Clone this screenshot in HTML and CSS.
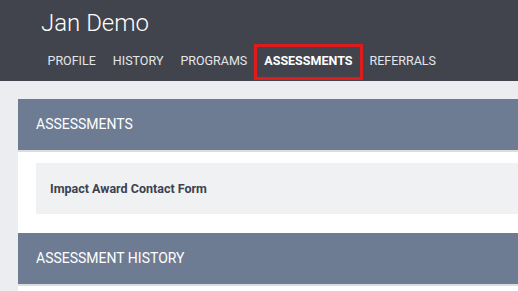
FILE: index.html
```html
<!DOCTYPE html>
<html lang="en">
<head>
<meta charset="UTF-8">
<meta name="viewport" content="width=device-width, initial-scale=1.0">
<title>Jan Demo</title>
<link rel="stylesheet" href="styles.css">
</head>
<body>
<div id="header">
  <div id="client-name">Jan Demo</div>
  <div id="tabs">
    <a class="tab">PROFILE</a>
    <a class="tab">HISTORY</a>
    <a class="tab">PROGRAMS</a>
    <a class="tab active">ASSESSMENTS</a>
    <a class="tab">REFERRALS</a>
  </div>
</div>

<div id="content">
  <div class="panel">
    <div class="panel-title">ASSESSMENTS</div>
    <div class="panel-body">
      <div class="form-row">Impact Award Contact Form</div>
    </div>
  </div>
  <div class="panel">
    <div class="panel-title">ASSESSMENT HISTORY</div>
    <div class="panel-body"></div>
  </div>
</div>
</body>
</html>
```

FILE: styles.css
```css
body {
  margin: 0;
  font-family: Roboto, "Liberation Sans", sans-serif;
  background-color: #ecedf1;
  overflow: hidden;
}
#header {
  background-color: #41444d;
  height: 81px;
  padding-left: 39px;
}
#client-name {
  color: #ffffff;
  font-size: 24px;
  font-weight: 300;
  padding: 8px 0 0 2px;
  height: 38px;
  line-height: 30px;
}
#tabs {
  display: flex;
}
.tab {
  display: block;
  color: #e4e6ea;
  font-size: 12.5px;
  height: 32px;
  line-height: 30px;
  padding: 0 8.5px;
  cursor: pointer;
}
.tab.active {
  color: #ffffff;
  font-weight: bold;
  outline: 3px solid #e01b1b;
  outline-offset: -1px;
}
/* Panels */
#content {
  padding: 18px 0 0 18px;
}
.panel {
  background-color: #ffffff;
}
.panel-title {
  background-color: #6e7c93;
  color: #ffffff;
  font-size: 14px;
  height: 51px;
  line-height: 51px;
  padding-left: 18px;
  border-bottom: 2px solid #dcdde1;
}
.panel-body {
  padding: 11px 0 19px 18px;
}
.form-row {
  background-color: #f0f1f3;
  color: #3c4250;
  font-size: 12.5px;
  font-weight: bold;
  height: 51px;
  line-height: 51px;
  padding-left: 14px;
}
```
